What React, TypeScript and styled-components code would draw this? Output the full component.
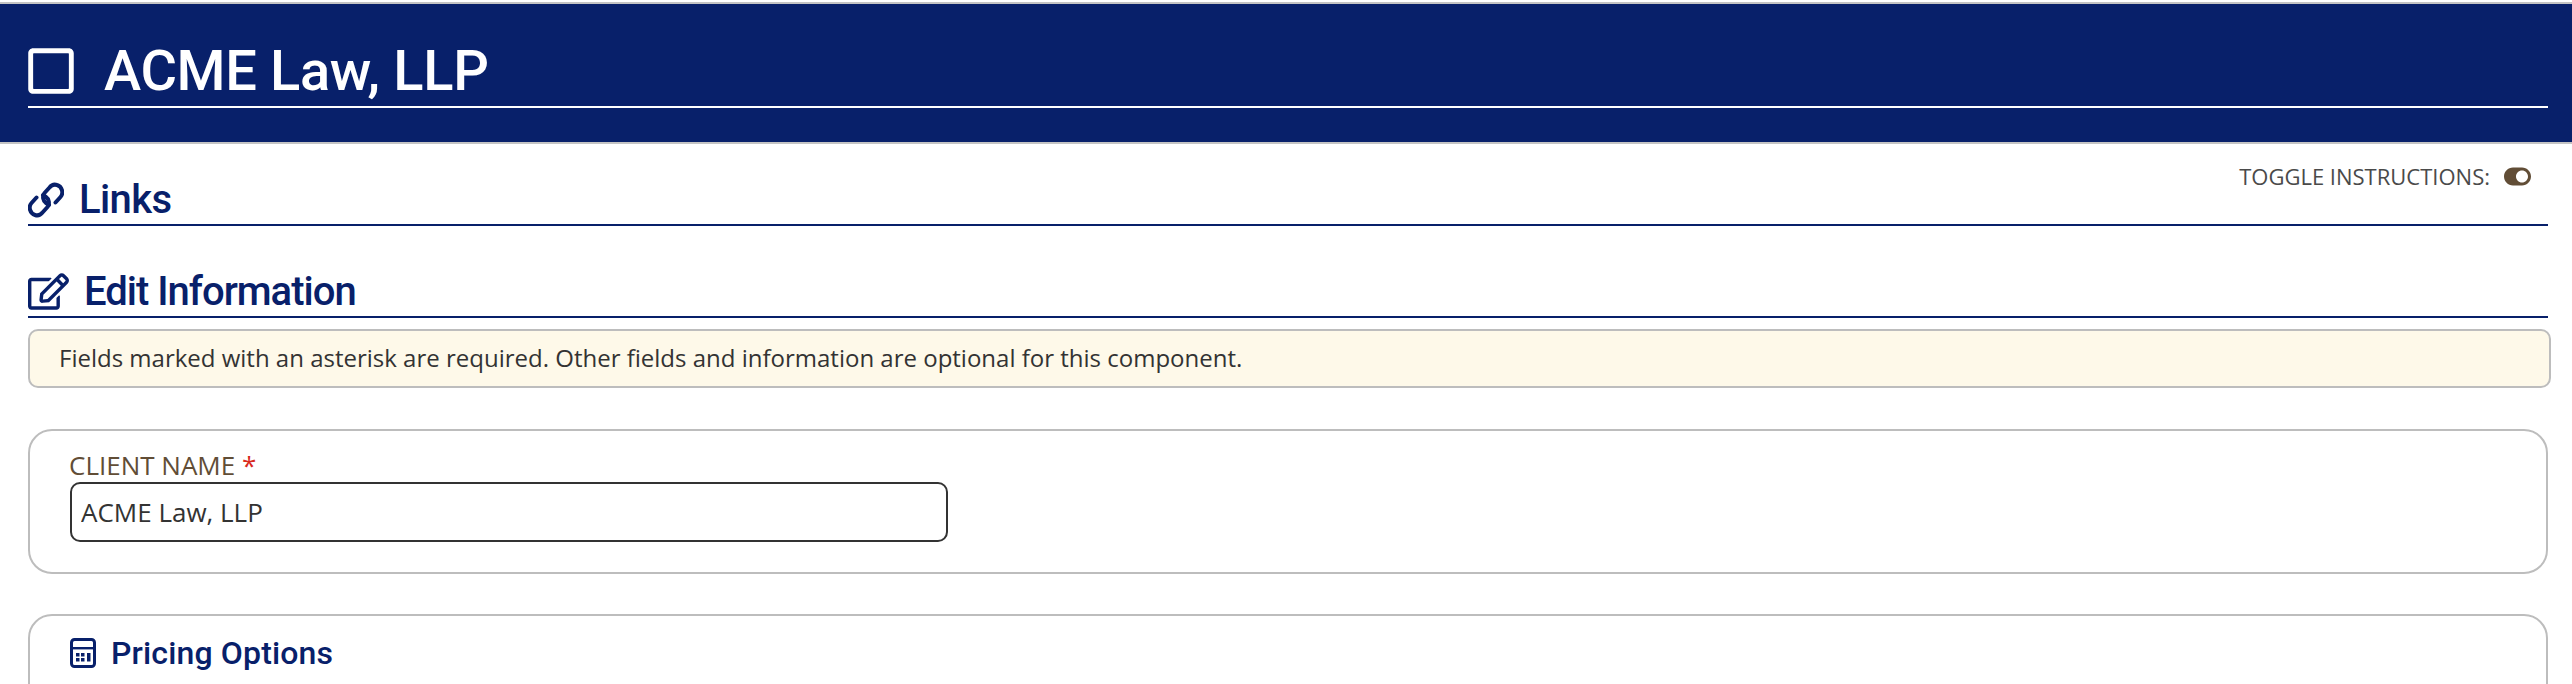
import React, { FC } from 'react';
import styled, { createGlobalStyle } from 'styled-components';
import { FaRegEdit, FaRegSquare, FaToggleOn } from 'react-icons/fa';

const NAVY = '#08206a';

const GlobalStyle = createGlobalStyle`
   html, body {
      margin: 0;
      height: 684px;
      overflow: hidden;
      background: #fff;
   }
   body {
      font-family: 'Open Sans', 'Liberation Sans', sans-serif;
      color: #333;
   }
`;

const LINK_PATH = 'M27.5 20.5 L32.5 15 C36 11 34 4.5 29 3 C26 2 23.5 3 21.5 5.5 L16.5 11 C14 14 15 19 18 21 L21 23';

const LinkIcon: FC = () => (
   <svg width='36' height='36' viewBox='0 0 36 36' fill='none' stroke={NAVY} strokeWidth='4' strokeLinecap='round' strokeLinejoin='round'>
      <path d={LINK_PATH} />
      <path d={LINK_PATH} transform='rotate(180 18 18)' />
   </svg>
);

const CalculatorIcon: FC = () => (
   <svg width='26' height='30' viewBox='0 0 26 30' fill='none'>
      <rect x='1.5' y='1.5' width='23' height='27' rx='3' stroke={NAVY} strokeWidth='3' />
      <g fill={NAVY}>
         <rect x='2' y='9' width='22' height='2.4' />
         <rect x='6' y='15' width='3.5' height='3.5' />
         <rect x='11' y='15' width='3.5' height='3.5' />
         <rect x='6' y='20' width='3.5' height='3.5' />
         <rect x='11' y='20' width='3.5' height='3.5' />
         <rect x='17' y='15' width='3.5' height='8.5' />
      </g>
   </svg>
);

const App: FC = (): JSX.Element => (
   <Page>
      <GlobalStyle />
      <Banner>
         <BannerTitle>
            <FaRegSquare size={52} />
            <span>ACME Law, LLP</span>
         </BannerTitle>
      </Banner>
      <Content>
         <SectionHeading $height={82} $pad={17}>
            <LinksLabel>
               <LinkIcon />
               <LinksText>Links</LinksText>
            </LinksLabel>
            <ToggleRow>
               TOGGLE INSTRUCTIONS:
               <FaToggleOn size={27} color='#614d36' />
            </ToggleRow>
         </SectionHeading>
         <SectionHeading $height={92} $pad={45}>
            <HeadingLabel>
               <FaRegEdit size={41} />
               <EditText>Edit Information</EditText>
            </HeadingLabel>
         </SectionHeading>
         <Notice>
            Fields marked with an asterisk are required. Other fields and information are optional for this component.
         </Notice>
         <Card>
            <FieldLabel>
               CLIENT NAME <Required>*</Required>
            </FieldLabel>
            <TextInput defaultValue='ACME Law, LLP' />
         </Card>
         <PricingCard>
            <PricingHeading>
               <CalculatorIcon />
               <span>Pricing Options</span>
            </PricingHeading>
         </PricingCard>
      </Content>
   </Page>
);

export default App;

const Page = styled.div`
   padding-top: 2px;
`;

const Banner = styled.header`
   box-sizing: border-box;
   height: 142px;
   padding: 0 24px 0 28px;
   background: ${NAVY};
   border-top: 2px solid #c4c4c4;
   border-bottom: 2px solid #c4c4c4;
`;

const BannerTitle = styled.h1`
   box-sizing: border-box;
   display: flex;
   align-items: center;
   gap: 27px;
   height: 104px;
   margin: 0;
   padding-top: 32px;
   border-bottom: 2px solid #fff;
   color: #fff;
   font: 500 56px/1 Roboto, sans-serif;
   letter-spacing: -0.35px;
   svg {
      margin-left: -3px;
   }
`;

const Content = styled.main`
   padding: 0 24px 0 28px;
`;

const SectionHeading = styled.div<{ $height: number; $pad: number }>`
   box-sizing: border-box;
   display: flex;
   justify-content: space-between;
   align-items: flex-start;
   height: ${p => p.$height}px;
   padding-top: ${p => p.$pad}px;
   border-bottom: 2px solid ${NAVY};
   color: ${NAVY};
`;

const HeadingLabel = styled.h2`
   display: flex;
   align-items: center;
   margin: 0;
   font: 500 40px/1 Roboto, sans-serif;
`;

const LinksLabel = styled(HeadingLabel)`
   margin-top: 19px;
`;

const LinksText = styled.span`
   margin-left: 15px;
   letter-spacing: -0.6px;
`;

const EditText = styled.span`
   margin-left: 15px;
   letter-spacing: -1px;
`;

const ToggleRow = styled.div`
   display: flex;
   align-items: center;
   gap: 14px;
   margin-right: 17px;
   color: #4a4a4a;
   font-size: 22px;
   line-height: 30px;
`;

const Notice = styled.div`
   box-sizing: border-box;
   height: 59px;
   margin: 11px -3px 0 0;
   padding: 0 29px 2px;
   display: flex;
   align-items: center;
   background: #fef9e9;
   border: 2px solid #bdbdbd;
   border-radius: 10px;
   font-size: 24px;
`;

const Card = styled.section`
   box-sizing: border-box;
   height: 145px;
   margin: 41px 0 0 0;
   padding: 18px 40px 0;
   background: #fff;
   border: 2px solid #bdbdbd;
   border-radius: 24px;
`;

const FieldLabel = styled.label`
   display: block;
   margin-left: -1px;
   color: #614d36;
   font-size: 26px;
   line-height: 33px;
`;

const Required = styled.span`
   color: #d9291c;
`;

const TextInput = styled.input`
   box-sizing: border-box;
   display: block;
   width: 878px;
   height: 60px;
   padding: 0 9px;
   color: #333;
   background: #fff;
   border: 2px solid #333;
   border-radius: 10px;
   font: 400 26px 'Open Sans', sans-serif;
   outline: none;
`;

const PricingCard = styled(Card)`
   height: 200px;
   margin-top: 40px;
   padding-top: 21px;
`;

const PricingHeading = styled.h3`
   display: flex;
   align-items: center;
   gap: 15px;
   margin: 0;
   color: ${NAVY};
   font: 500 32px/1 Roboto, sans-serif;
   letter-spacing: 0.15px;
`;
